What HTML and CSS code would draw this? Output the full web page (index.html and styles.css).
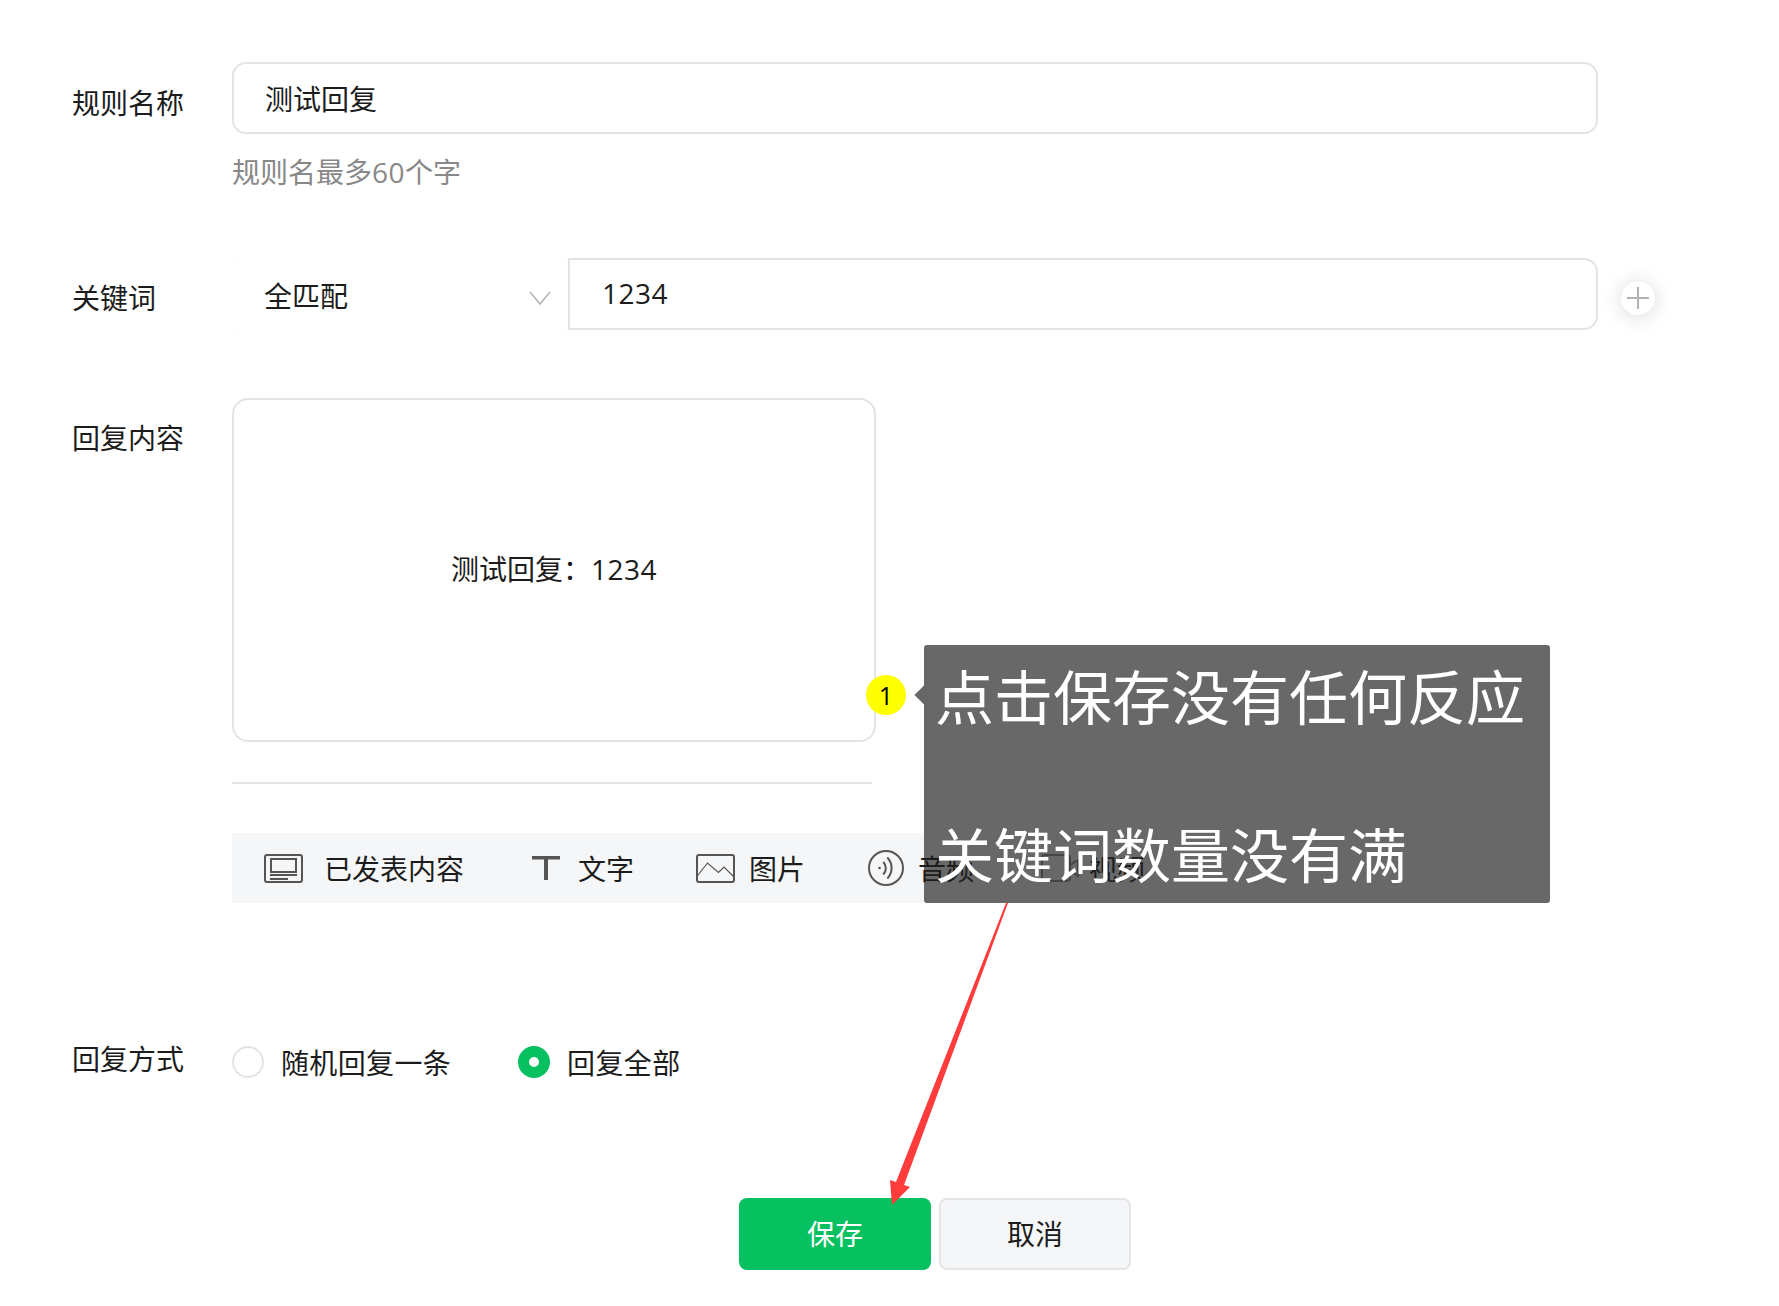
FILE: index.html
```html
<!DOCTYPE html>
<html lang="zh-CN">
<head>
<meta charset="utf-8">
<title>规则</title>
<link rel="stylesheet" href="styles.css">
</head>
<body>
<main class="page">
  <form class="form">
    <div class="row row-name">
      <div class="label label-name">规则名称</div>
      <div class="field">
        <div class="input input-name">测试回复</div>
        <div class="hint">规则名最多<span class="num">60</span>个字</div>
      </div>
    </div>

    <div class="row row-key">
      <div class="label label-key">关键词</div>
      <div class="keyfield">
        <div class="select"><span>全匹配</span>
          <svg class="chevron" viewBox="0 0 22 14"><path d="M1 1l10 12L21 1" fill="none" stroke="#b4b4b4" stroke-width="1.6"/></svg>
        </div>
        <div class="input input-key"><span class="num">1234</span></div>
      </div>
      <div class="plus"><svg viewBox="0 0 22 22"><path d="M11 0v22M0 11h22" stroke="#b2b2b2" stroke-width="2"/></svg></div>
    </div>

    <div class="row row-content">
      <div class="label label-content">回复内容</div>
      <div class="field">
        <div class="card"><span>测试回复：<span class="num">1234</span></span></div>
        <div class="rule"></div>
        <div class="toolbar">
          <div class="tool tool-a">
            <svg class="ico-a" viewBox="0 0 39 29" fill="none" stroke="#555" stroke-width="2"><rect x="1" y="1" width="37" height="27" rx="2"/><rect x="7" y="5" width="25" height="13"/><path d="M6 21h27M6 25h18"/></svg>
            <span>已发表内容</span>
          </div>
          <div class="tool tool-t">
            <svg class="ico-t" viewBox="0 0 28 24" fill="none" stroke="#555"><path d="M0 1.750h28" stroke-width="3.500"/><path d="M14 1.750V24" stroke-width="4"/></svg>
            <span>文字</span>
          </div>
          <div class="tool tool-i">
            <svg class="ico-i" viewBox="0 0 39 29" fill="none" stroke="#555" stroke-width="2"><rect x="1" y="1" width="37" height="27" rx="2"/><path d="M0.500 23L11.500 9l11 9.500L28 13l10 10" stroke-width="1.200"/></svg>
            <span>图片</span>
          </div>
          <div class="tool tool-v">
            <svg class="ico-v" viewBox="0 0 36 36" fill="none" stroke="#555" stroke-width="2"><circle cx="18" cy="18" r="17"/><circle cx="11.500" cy="18" r="1.300" fill="#555" stroke="none"/><path d="M15.300 12a9 9 0 0 1 0 12.500M19.300 7.500a15 15 0 0 1 0 21"/></svg>
            <span>音频</span>
          </div>
          <div class="tool tool-m">
            <svg class="ico-m" viewBox="0 0 38 28" fill="none" stroke="#444" stroke-width="2"><rect x="1" y="1" width="28" height="26" rx="3"/><path d="M29 11l8-5v16l-8-5"/></svg>
            <span>视频</span>
          </div>
        </div>
      </div>
    </div>

    <div class="row row-way">
      <div class="label label-way">回复方式</div>
      <div class="radios">
        <label class="radio"><i class="dot"></i><span>随机回复一条</span></label>
        <label class="radio"><i class="dot dot-on"></i><span>回复全部</span></label>
      </div>
    </div>

    <div class="actions">
      <div class="btn btn-save">保存</div>
      <div class="btn btn-cancel">取消</div>
    </div>
  </form>

  <div class="badge">1</div>
  <div class="bubble"><span class="bubble-text">点击保存没有任何反应<br><br>关键词数量没有满</span></div>

  <svg class="arrow" viewBox="0 0 1779 1306"><path d="M1006 903L896 1182 890 1180 892 1205 910 1187 904 1185 1008 903Z" fill="#ff3b3b"/></svg>
</main>
</body>
</html>
```
FILE: styles.css
```css
* { box-sizing: border-box; }
html, body { margin: 0; background: #fff; }
body { font-family: "Noto Sans CJK SC", "Noto Sans", sans-serif; font-size: 28px; color: #1c1c1c; }
.page { position: relative; width: 1779px; height: 1306px; overflow: hidden; }
.form { display: flex; flex-direction: column; padding: 62px 0 0 72px; }
.row { display: flex; align-items: flex-start; }
.label { width: 160px; flex: none; line-height: 40px; }
.label-name { margin-top: 20px; }
.label-key { margin-top: 19px; }
.label-content { margin-top: 19px; }
.label-way { margin-top: -1px; }
.num { font-family: "Open Sans", sans-serif; letter-spacing: .5px; }
.input { border: 2px solid #e4e4e6; background: #fff; display: flex; align-items: center; line-height: 40px; }
.input-name { width: 1366px; height: 72px; border-radius: 14px; padding: 0 31px; }
.hint { color: #888; line-height: 40px; margin-top: 17px; }
.row-key { margin-top: 66px; }
.keyfield { display: flex; }
.select { width: 336px; height: 76px; display: flex; align-items: center; justify-content: space-between; padding: 0 17px 2px 32px; border-radius: 10px; box-shadow: 0 0 2px rgba(0,0,0,.05); }
.chevron { width: 22px; height: 14px; margin-top: 6px; }
.input-key { width: 1030px; height: 72px; border-radius: 0 14px 14px 0; padding: 0 32px 2px; }
.plus { width: 36px; height: 36px; margin: 22px 0 0 22px; border-radius: 50%; background: #fff; border: 1px solid #eee; box-shadow: 0 2px 20px rgba(0,0,0,.13); display: flex; align-items: center; justify-content: center; }
.plus svg { width: 22px; height: 22px; display: block; }
.row-content { margin-top: 64px; }
.card { width: 644px; height: 344px; border: 2px solid #e4e4e6; border-radius: 16px; display: flex; align-items: center; justify-content: center; padding-bottom: 4px; }
.rule { width: 640px; height: 2px; background: #e4e4e6; margin-top: 40px; }
.toolbar { width: 941px; height: 70px; margin-top: 49px; background: #f5f6f8; display: flex; align-items: center; padding-left: 32px; }
.tool { display: flex; align-items: center; flex: none; line-height: 40px; }
.tool svg { display: block; flex: none; }
.ico-a { width: 39px; height: 29px; margin-right: 21px; }
.ico-t { width: 28px; height: 24px; margin-right: 18px; }
.ico-i { width: 39px; height: 29px; margin-right: 14px; }
.ico-v { width: 36px; height: 36px; margin-right: 14px; }
.ico-m { width: 38px; height: 28px; margin-right: 10px; }
.tool-t { margin-left: 68px; }
.tool-i { margin-left: 62px; }
.tool-v { margin-left: 63px; }
.tool-m { margin-left: 67px; }
.tool-v, .tool-m { position: relative; z-index: 2; }
.row-way { margin-top: 136px; }
.radios { display: flex; gap: 67px; margin-top: 3px; }
.radio { display: flex; align-items: center; gap: 17px; line-height: 40px; letter-spacing: .35px; }
.dot { width: 32px; height: 32px; border-radius: 50%; border: 2px solid #e4e4e6; flex: none; background: #fff; }
.dot-on { border: 11px solid #07c160; }
.actions { display: flex; gap: 8px; margin: 116px 0 0 667px; }
.btn { width: 192px; height: 72px; border-radius: 8px; display: flex; align-items: center; justify-content: center; padding-bottom: 2px; }
.btn-save { background: #07c160; color: #fff; }
.btn-cancel { background: #f5f6f8; border: 2px solid #e5e5e8; }
.badge { position: absolute; left: 866px; top: 675px; width: 40px; height: 40px; border-radius: 50%; background: #ff0; color: #000; font-family: "Open Sans", sans-serif; font-size: 25px; display: flex; align-items: center; justify-content: center; }
.bubble { position: absolute; left: 924px; top: 645px; width: 626px; height: 258px; padding: 10px 17px 5px 11px; background: rgba(102,102,102,.99); border-radius: 3px; color: #fff; font-size: 59px; line-height: 79px; white-space: nowrap; }
.bubble::before { content: ""; position: absolute; left: -9px; top: 41px; width: 18px; height: 18px; background: #666; transform: rotate(45deg) scale(.75); }
.bubble-text { position: relative; z-index: 3; }
.arrow { position: absolute; left: 0; top: 0; width: 1779px; height: 1306px; pointer-events: none; z-index: 4; }
```
